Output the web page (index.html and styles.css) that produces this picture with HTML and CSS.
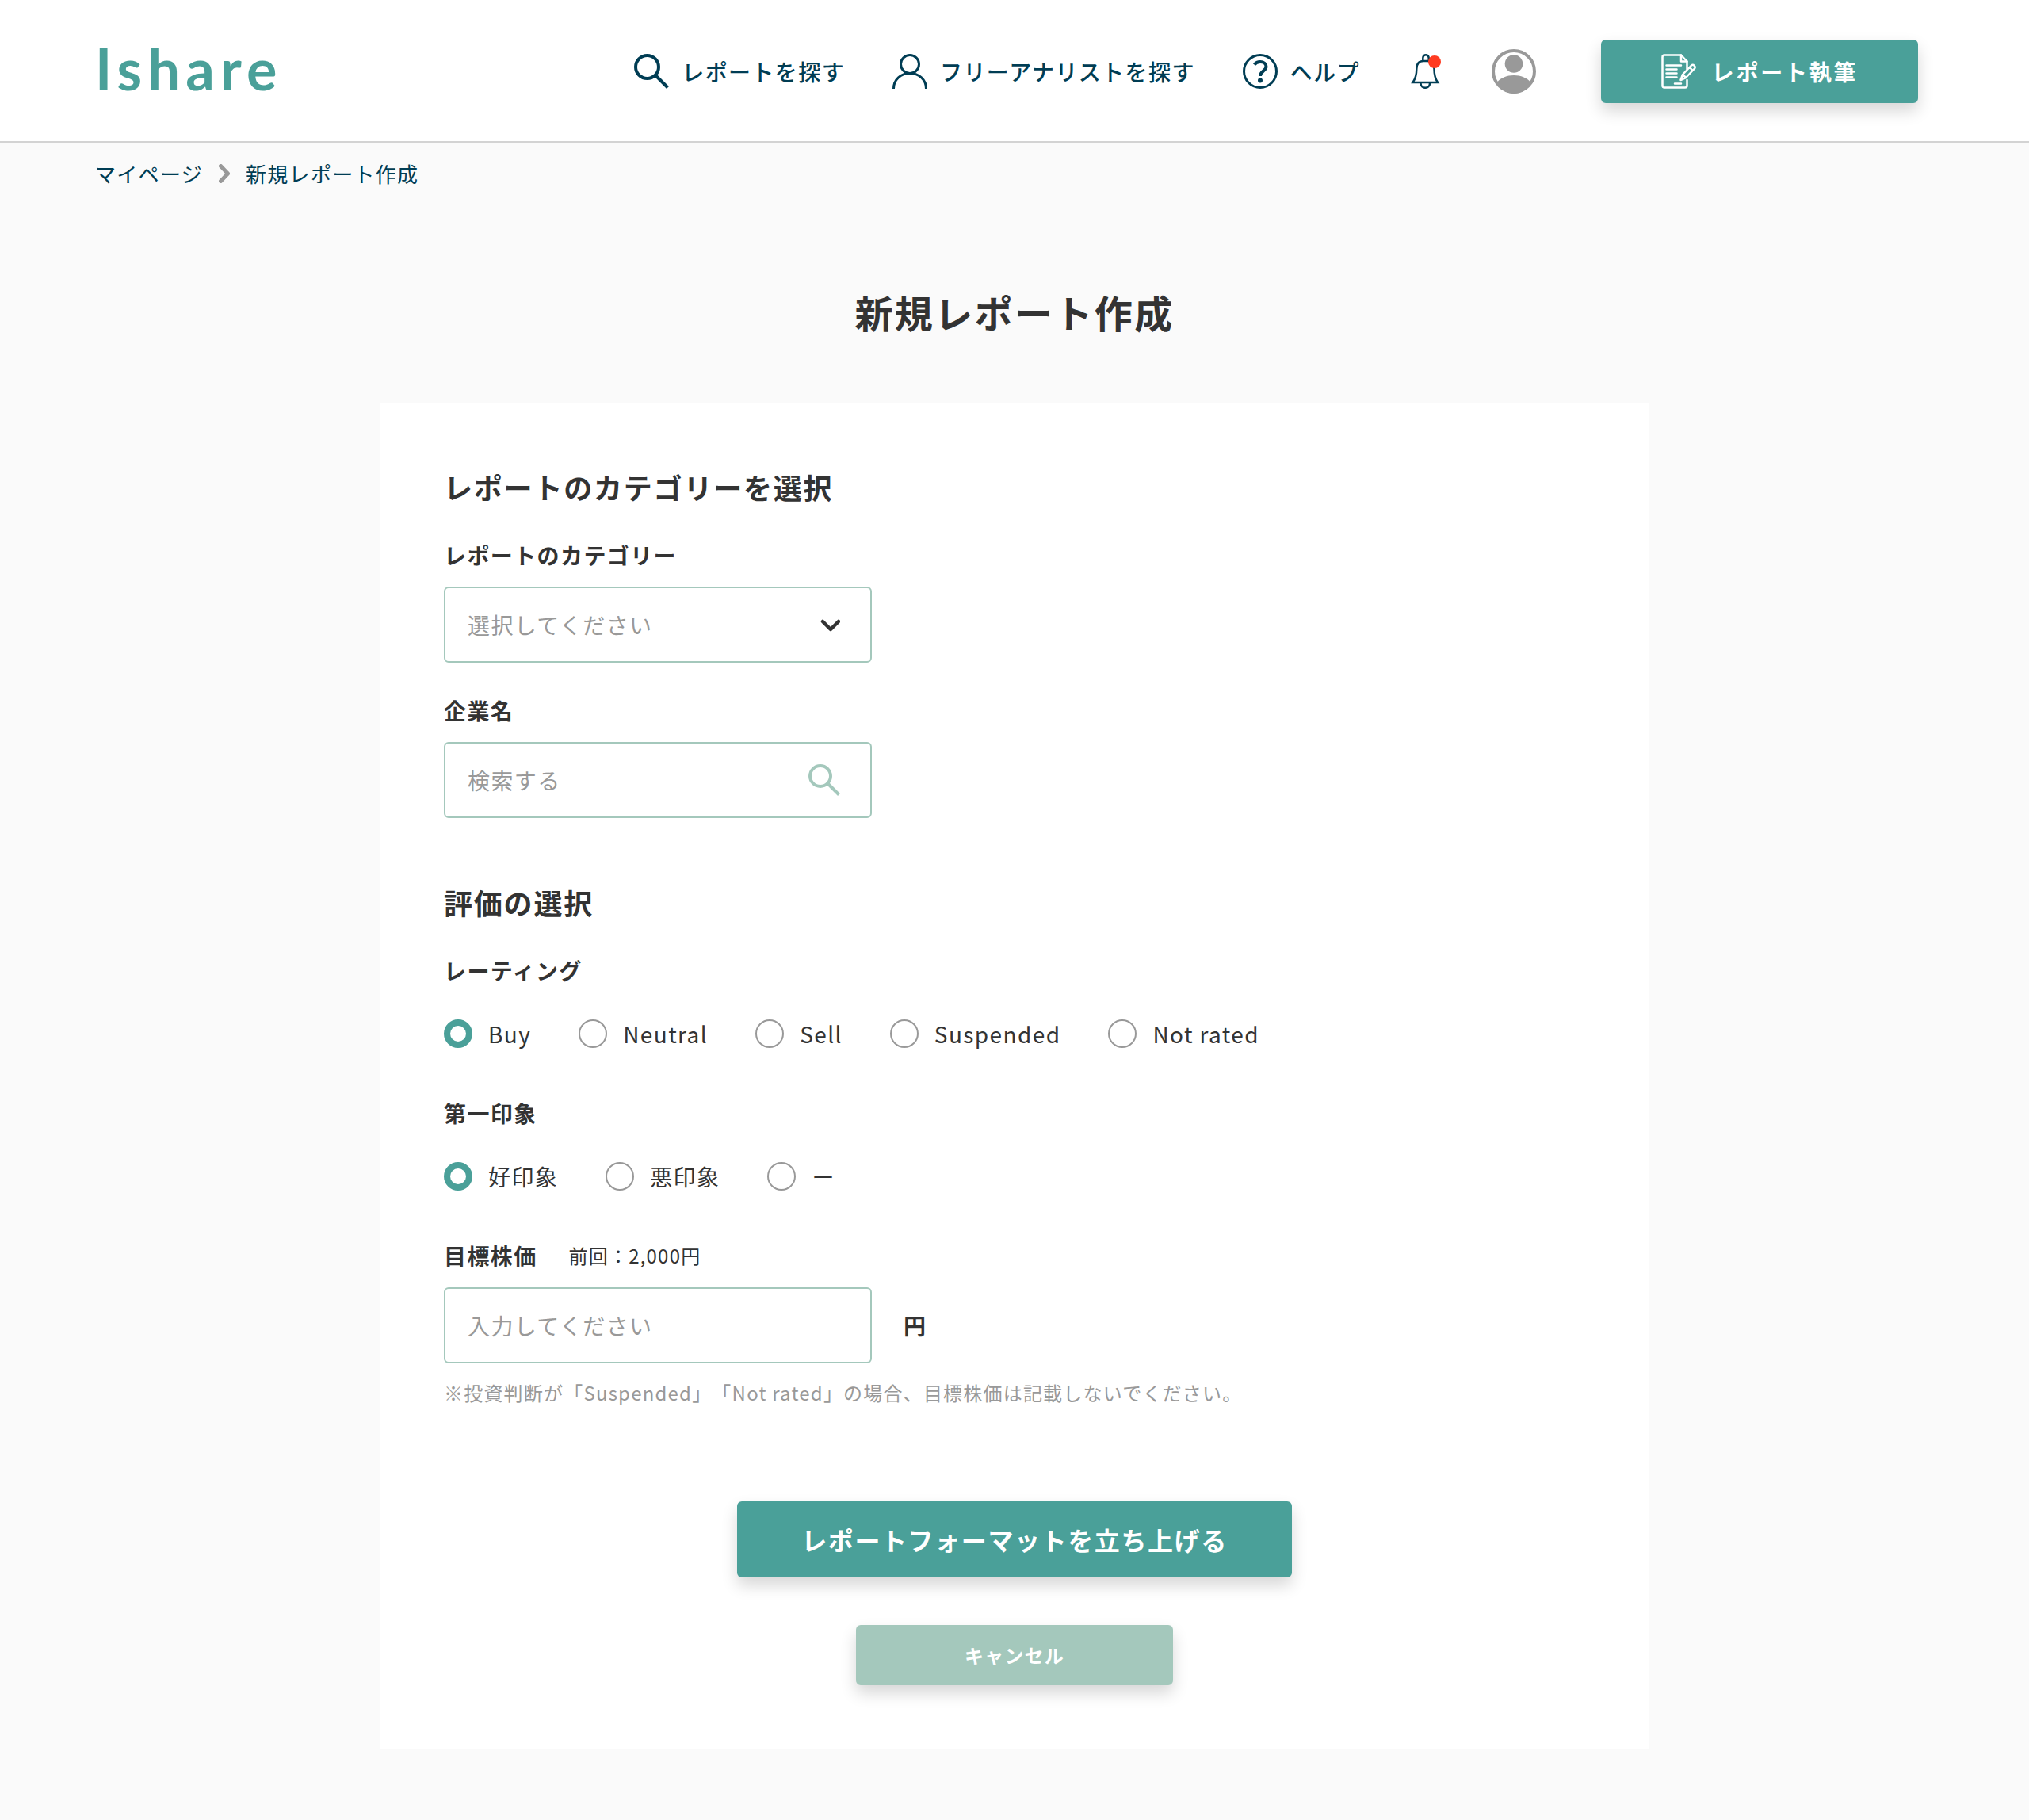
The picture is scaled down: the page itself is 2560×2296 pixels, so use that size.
FILE: index.html
```html
<!DOCTYPE html>
<html lang="ja">
<head>
    <meta charset="UTF-8">
    <meta name="viewport" content="width=device-width, initial-scale=1.0">
    <title>新規レポート作成 | Ishare</title>
    <link rel="stylesheet" href="styles.css">
</head>
<body>
    <header class="header">
        <a class="logo" href="#">Ishare</a>
        <nav class="nav">
            <a class="nav-link" href="#">
                <svg class="icon" viewBox="0 0 44 44" fill="none" stroke="currentColor" stroke-width="4">
                    <circle cx="16.5" cy="16.5" r="14.5"/>
                    <path d="M27 27L42.5 42.5"/>
                </svg>
                レポートを探す
            </a>
            <a class="nav-link" href="#">
                <svg class="icon" viewBox="0 0 44 44" fill="none" stroke="currentColor" stroke-width="3">
                    <circle cx="22" cy="13" r="11.5"/>
                    <path d="M1.5 44C1.5 32.5 10.5 24.5 22 24.5S42.5 32.5 42.5 44"/>
                </svg>
                フリーアナリストを探す
            </a>
            <a class="nav-link" href="#">
                <svg class="icon" viewBox="0 0 44 44" fill="none" stroke="currentColor" stroke-width="3">
                    <circle cx="22" cy="22" r="20.5"/>
                    <path d="M14.5 13.5C16.5 11 19 10 22 10C26.5 10 29.5 12.5 29.5 16.2C29.5 21 22 22 22 28" stroke-width="4"/>
                    <circle cx="22" cy="33.5" r="3" fill="currentColor" stroke="none"/>
                </svg>
                ヘルプ
            </a>
            <a class="nav-link" href="#" aria-label="お知らせ">
                <svg class="icon" viewBox="0 0 44 44" fill="none" stroke="currentColor" stroke-width="2.5">
                    <path d="M19.3 9V5C19.3 0 26.700 0 26.700 5V9"/>
                    <path d="M6.500 36C10 31 11.300 26 11.300 19C11.300 12 15 9 20 9H25C30 9 33.500 12 33.500 19C33.500 26 34.500 31 38 36Z"/>
                    <path d="M16.500 37C16.500 44.700 28 44.700 28 37"/>
                    <circle cx="34" cy="10" r="8" fill="#ff3b21" stroke="none"/>
                </svg>
            </a>
            <a class="nav-link" href="#" aria-label="アカウント">
                <svg class="avatar" viewBox="0 0 60 60">
                    <circle cx="30" cy="30" r="26" fill="none" stroke="#999" stroke-width="4"/>
                    <circle cx="30" cy="20.5" r="11.3" fill="#999"/>
                    <path d="M9 43.5C14 38 21 35 30 35S46 38 51 43.5C46 53 39 58 30 58S14 53 9 43.5Z" fill="#999"/>
                </svg>
            </a>
            <button class="btn btn-write" type="button">
                <svg class="icon" viewBox="0 0 44 44" fill="none" stroke="currentColor" stroke-width="2.5" stroke-linejoin="round" stroke-linecap="round">
                    <path d="M32.5 19V9.500L25 1.500H4C2.500 1.500 1.500 2.500 1.500 4V40C1.500 41.500 2.500 42.500 4 42.500H30C31.500 42.500 32.500 41.500 32.500 40V33"/>
                    <path d="M25 1.500V9.500H32.500M6.500 14.500H25M6.500 19.500H19.500M6.500 24.500H19.500M6.500 29.500H19.500M17 37.500H25"/>
                    <path d="M24.500 33L27 26L38 14.500C40.500 12.500 44 16 42 18.500L31 30L24.500 33ZM27 26L31 30M36 17L39.500 21"/>
                </svg>
                レポート執筆
            </button>
        </nav>
    </header>

    <nav class="breadcrumb">
        <a href="#">マイページ</a>
        <svg class="breadcrumb-arrow" viewBox="0 0 14 24" fill="none" stroke="#999" stroke-width="5" stroke-linecap="round" stroke-linejoin="round">
            <path d="M2.5 2.5L11.5 12L2.5 21.5"/>
        </svg>
        <a href="#">新規レポート作成</a>
    </nav>

    <main>
        <h1>新規レポート作成</h1>

        <form class="card">
            <section>
                <h2>レポートのカテゴリーを選択</h2>
                <div class="field">
                    <label class="label" for="category">レポートのカテゴリー</label>
                    <div class="control">
                        <select class="input" id="category">
                            <option value="">選択してください</option>
                        </select>
                        <svg class="control-icon" viewBox="0 0 40 40" fill="none" stroke="#333" stroke-width="4.5" stroke-linecap="round" stroke-linejoin="round">
                            <path d="M18 16L28 26L38 16"/>
                        </svg>
                    </div>
                </div>
                <div class="field">
                    <label class="label" for="company">企業名</label>
                    <div class="control">
                        <input class="input" type="text" id="company" placeholder="検索する">
                        <svg class="control-icon" viewBox="0 0 40 40" fill="none" stroke="#a4c8bc" stroke-width="4">
                            <circle cx="15" cy="15" r="13"/>
                            <path d="M24.5 24.5L38.5 38.5"/>
                        </svg>
                    </div>
                </div>
            </section>

            <section>
                <h2>評価の選択</h2>
                <fieldset class="field">
                    <legend class="label">レーティング</legend>
                    <div class="radios">
                        <label class="radio"><input type="radio" name="rating" checked>Buy</label>
                        <label class="radio"><input type="radio" name="rating">Neutral</label>
                        <label class="radio"><input type="radio" name="rating">Sell</label>
                        <label class="radio"><input type="radio" name="rating">Suspended</label>
                        <label class="radio"><input type="radio" name="rating">Not rated</label>
                    </div>
                </fieldset>
                <fieldset class="field">
                    <legend class="label">第一印象</legend>
                    <div class="radios">
                        <label class="radio"><input type="radio" name="impression" checked>好印象</label>
                        <label class="radio"><input type="radio" name="impression">悪印象</label>
                        <label class="radio"><input type="radio" name="impression">ー</label>
                    </div>
                </fieldset>
                <div class="field">
                    <div class="label-row">
                        <label class="label" for="price">目標株価</label>
                        <span class="previous">前回：2,000円</span>
                    </div>
                    <div class="price-row">
                        <div class="control">
                            <input class="input" type="text" id="price" placeholder="入力してください">
                        </div>
                        <span class="label">円</span>
                    </div>
                    <p class="note">※投資判断が「Suspended」「Not rated」の場合、目標株価は記載しないでください。</p>
                </div>
            </section>

            <div class="actions">
                <button class="btn btn-submit" type="submit">レポートフォーマットを立ち上げる</button>
                <button class="btn btn-cancel" type="button">キャンセル</button>
            </div>
        </form>
    </main>
</body>
</html>
```
FILE: styles.css
```css
* {
    box-sizing: border-box;
    margin: 0;
    padding: 0;
    letter-spacing: 0.05em;
}
body {
    font-family: "Noto Sans CJK JP", sans-serif;
    font-size: 28px;
    line-height: 40px;
    color: #333;
    background: #fafafa;
    text-spacing-trim: space-all;
}
a {
    color: #003d54;
    text-decoration: none;
}
button, input, select {
    font: inherit;
}

/* header */
.header {
    display: flex;
    align-items: center;
    justify-content: space-between;
    padding: 2px 140px 0 120px;
    height: 180px;
    background: #fff;
    border-bottom: 2px solid #d3d3d3;
}
.logo {
    margin-bottom: 8px;
    font-family: Lato, sans-serif;
    font-size: 72px;
    font-weight: 700;
    line-height: 80px;
    letter-spacing: 0.1em;
    color: #4aa099;
}
.nav {
    display: flex;
    align-items: center;
    gap: 60px;
}
.nav-link {
    display: flex;
    align-items: center;
    gap: 16px;
    font-weight: 500;
}
.icon {
    width: 44px;
    height: 44px;
}
.avatar {
    width: 60px;
    height: 60px;
}

/* buttons */
.btn {
    display: flex;
    align-items: center;
    justify-content: center;
    border: none;
    border-radius: 6px;
    color: #fff;
    background: #4aa099;
    box-shadow: 0 10px 20px rgba(0,0,0,0.16);
    font-weight: 700;
    cursor: pointer;
}
.btn-write {
    gap: 20px;
    width: 400px;
    height: 80px;
    margin-left: 20px;
    letter-spacing: 0.1em;
}
.btn-submit {
    width: 700px;
    height: 96px;
    font-size: 32px;
}
.btn-cancel {
    width: 400px;
    height: 76px;
    font-size: 24px;
    background: #a4c8bc;
}

.breadcrumb {
    display: flex;
    align-items: center;
    gap: 20px;
    padding: 20px 120px 0;
    font-size: 26px;
    line-height: 38px;
}
.breadcrumb-arrow {
    width: 14px;
    height: 24px;
}

main {
    padding: 120px 40px 90px;
}
h1 {
    font-size: 48px;
    line-height: 70px;
    text-align: center;
    margin-bottom: 80px;
}
h2 {
    font-size: 36px;
    line-height: 52px;
    margin-bottom: 40px;
}

/* form */
.card {
    display: flex;
    flex-direction: column;
    gap: 80px;
    max-width: 1600px;
    margin: 0 auto;
    padding: 80px;
    background: #fff;
}
.field {
    border: none;
}
.field + .field {
    margin-top: 40px;
}
fieldset.field + .field {
    margin-top: 60px;
}
.label {
    display: block;
    font-weight: 700;
}
.control {
    position: relative;
    width: 540px;
    margin-top: 20px;
}
.input {
    display: block;
    width: 100%;
    height: 96px;
    padding: 0 28px;
    border: 2px solid #a4c8bc;
    border-radius: 6px;
    background: #fff;
    color: #333;
    appearance: none;
}
select.input, .input::placeholder {
    color: #999;
}
.control-icon {
    position: absolute;
    top: 28px;
    right: 40px;
    width: 40px;
    height: 40px;
    pointer-events: none;
}
.radios {
    display: flex;
    flex-wrap: wrap;
    gap: 60px;
    margin-top: 40px;
}
.radio {
    display: flex;
    align-items: center;
    gap: 20px;
}
.radio input {
    appearance: none;
    width: 36px;
    height: 36px;
    border: 2px solid #999;
    border-radius: 50%;
    background: #fff;
}
.radio input:checked {
    border: 8px solid #4aa099;
}
.label-row, .price-row {
    display: flex;
    align-items: center;
    gap: 40px;
}
.previous {
    font-size: 24px;
}
.price-row .label {
    margin-top: 20px;
}
.note {
    margin-top: 20px;
    font-size: 24px;
    line-height: 34px;
    color: #999;
}
.actions {
    display: flex;
    flex-direction: column;
    align-items: center;
    gap: 60px;
    margin-top: 40px;
}
```
